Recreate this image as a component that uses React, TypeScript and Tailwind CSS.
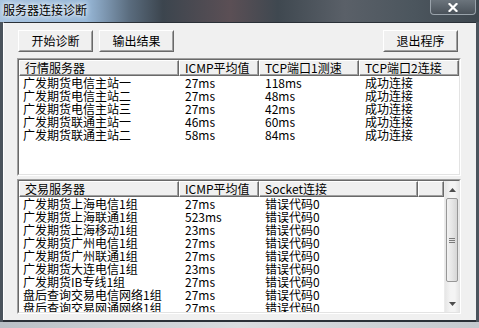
import { ReactNode } from 'react';

const quoteRows = [
  ['广发期货电信主站一', '27ms', '118ms', '成功连接'],
  ['广发期货电信主站二', '27ms', '48ms', '成功连接'],
  ['广发期货电信主站三', '27ms', '42ms', '成功连接'],
  ['广发期货联通主站一', '46ms', '60ms', '成功连接'],
  ['广发期货联通主站二', '58ms', '84ms', '成功连接'],
];

const tradeRows = [
  ['广发期货上海电信1组', '27ms', '错误代码0'],
  ['广发期货上海联通1组', '523ms', '错误代码0'],
  ['广发期货上海移动1组', '23ms', '错误代码0'],
  ['广发期货广州电信1组', '27ms', '错误代码0'],
  ['广发期货广州联通1组', '27ms', '错误代码0'],
  ['广发期货大连电信1组', '23ms', '错误代码0'],
  ['广发期货IB专线1组', '27ms', '错误代码0'],
  ['盘后查询交易电信网络1组', '27ms', '错误代码0'],
  ['盘后查询交易网通网络1组', '27ms', '错误代码0'],
];

function Button({ children }: { children: ReactNode }) {
  return (
    <div className="w-[75px] h-[22px] border border-t-white border-l-white border-b-[#696969] border-r-[#696969] bg-[#f0f0f0]">
      <div className="h-full border border-t-[#f0f0f0] border-l-[#f0f0f0] border-b-[#a0a0a0] border-r-[#a0a0a0] flex items-center justify-center text-[12px] leading-none text-black">
        {children}
      </div>
    </div>
  );
}

function HeaderCell({ w, children }: { w: string; children?: ReactNode }) {
  return (
    <div className={`${w} h-[16px] shrink-0 border border-t-white border-l-white border-b-[#696969] border-r-[#696969] bg-[#f0f0f0]`}>
      <div className="h-full border-b border-r border-b-[#a0a0a0] border-r-[#a0a0a0] pl-[5px] text-[12px] leading-[13px] text-black whitespace-nowrap">
        {children}
      </div>
    </div>
  );
}

function Sunken({ className, children }: { className: string; children: ReactNode }) {
  return (
    <div className={`${className} border border-t-[#a0a0a0] border-l-[#a0a0a0] border-b-white border-r-white`}>
      <div className="h-full border border-t-[#696969] border-l-[#696969] border-b-[#e3e3e3] border-r-[#e3e3e3] bg-white overflow-hidden flex">
        {children}
      </div>
    </div>
  );
}

export default function App() {
  return (
    <div
      className="w-[479px] h-[328px] overflow-hidden flex flex-col bg-[#4a535c]"
      style={{ fontFamily: '"Noto Sans CJK SC", "Liberation Sans", sans-serif' }}
    >
      {/* Title bar */}
      <div className="h-[22px] shrink-0 flex justify-between bg-[linear-gradient(90deg,#a8c4e0_0%,#98b8d8_18%,#5a6c7e_27%,#3c454e_34%,#5b4f55_48%,#3f4850_58%,#5a6068_72%,#4c565e_86%,#3e474f_100%)]">
        <div className="pl-[3px] pt-[3px] text-[12px] leading-[14px] text-black [text-shadow:0_0_4px_#ffffff,0_0_6px_#ffffff]">
          服务器连接诊断
        </div>
        <div className="w-[46px] h-[15px] mr-[3px] rounded-b-[4px] border border-t-0 border-[#9aa3ab] bg-[linear-gradient(180deg,#6b747c,#4a525a)] flex items-center justify-center">
          <svg width="10" height="9" viewBox="0 0 10 9">
            <path d="M1.5 1 L8.5 8 M8.5 1 L1.5 8" stroke="#ffffff" strokeWidth="2.2" strokeLinecap="square" />
          </svg>
        </div>
      </div>

      {/* Client area */}
      <div className="mx-[3px] h-[298px] shrink-0 border-t border-t-[#2a3037] bg-[#f0f0f0] border-l border-l-white flex flex-col">
        <div className="flex items-center pt-[7px] pl-[14px] pr-[18px]">
          <div className="flex gap-[6px]">
            <Button>开始诊断</Button>
            <Button>输出结果</Button>
          </div>
          <div className="ml-auto">
            <Button>退出程序</Button>
          </div>
        </div>

        <Sunken className="ml-[13px] mt-[6px] w-[444px] h-[118px]">
          <div className="flex flex-col">
            <div className="flex">
              <HeaderCell w="w-[160px]">行情服务器</HeaderCell>
              <HeaderCell w="w-[80px]">ICMP平均值</HeaderCell>
              <HeaderCell w="w-[100px]">TCP端口1测速</HeaderCell>
              <HeaderCell w="w-[100px]">TCP端口2连接</HeaderCell>
            </div>
            {quoteRows.map((r) => (
              <div key={r[0]} className="flex h-[13px] text-[12px] leading-[13px] text-black whitespace-nowrap">
                <div className="w-[160px] pl-[4px]">{r[0]}</div>
                <div className="w-[80px] pl-[6px]">{r[1]}</div>
                <div className="w-[100px] pl-[6px]">{r[2]}</div>
                <div className="w-[100px] pl-[6px]">{r[3]}</div>
              </div>
            ))}
          </div>
        </Sunken>

        <Sunken className="ml-[13px] mt-[3px] w-[444px] h-[135px]">
          <div className="w-[425px] flex flex-col">
            <div className="flex">
              <HeaderCell w="w-[160px]">交易服务器</HeaderCell>
              <HeaderCell w="w-[80px]">ICMP平均值</HeaderCell>
              <HeaderCell w="w-[159px]">Socket连接</HeaderCell>
              <HeaderCell w="w-[26px]" />
            </div>
            {tradeRows.map((r) => (
              <div key={r[0]} className="flex h-[13px] shrink-0 text-[12px] leading-[13px] text-black whitespace-nowrap">
                <div className="w-[160px] pl-[4px]">{r[0]}</div>
                <div className="w-[80px] pl-[6px]">{r[1]}</div>
                <div className="w-[159px] pl-[6px]">{r[2]}</div>
              </div>
            ))}
          </div>
          {/* Scrollbar */}
          <div className="w-[15px] h-full flex flex-col bg-[linear-gradient(90deg,#e6e6e6,#f4f4f4_40%,#f4f4f4_70%,#e6e6e6)] border-l border-l-[#ececec]">
            <div className="h-[17px] flex items-center justify-center">
              <svg width="7" height="4" viewBox="0 0 7 4"><path d="M0 4 L3.5 0 L7 4 Z" fill="#4d4d4d" /></svg>
            </div>
            <div className="h-[84px] mx-[1px] rounded-[2px] border border-[#979797] bg-[linear-gradient(90deg,#f2f2f2,#e6e6e6_50%,#d6d6d6)] flex items-center justify-center">
              <div className="flex flex-col gap-[1px]">
                <div className="w-[6px] h-[1px] bg-[#7a7a7a]" />
                <div className="w-[6px] h-[1px] bg-[#7a7a7a]" />
                <div className="w-[6px] h-[1px] bg-[#7a7a7a]" />
              </div>
            </div>
            <div className="flex-1" />
            <div className="h-[17px] flex items-center justify-center">
              <svg width="7" height="4" viewBox="0 0 7 4"><path d="M0 0 L7 0 L3.5 4 Z" fill="#4d4d4d" /></svg>
            </div>
          </div>
        </Sunken>
        <div className="flex-1" />
      </div>

      {/* Bottom frame */}
      <div className="mx-[3px] h-[2px] shrink-0 bg-[#2a3037]" />
      <div className="flex-1 bg-[linear-gradient(90deg,#b9c0c6,#d9dcdf_50%,#c4c9ce)]" />
    </div>
  );
}
